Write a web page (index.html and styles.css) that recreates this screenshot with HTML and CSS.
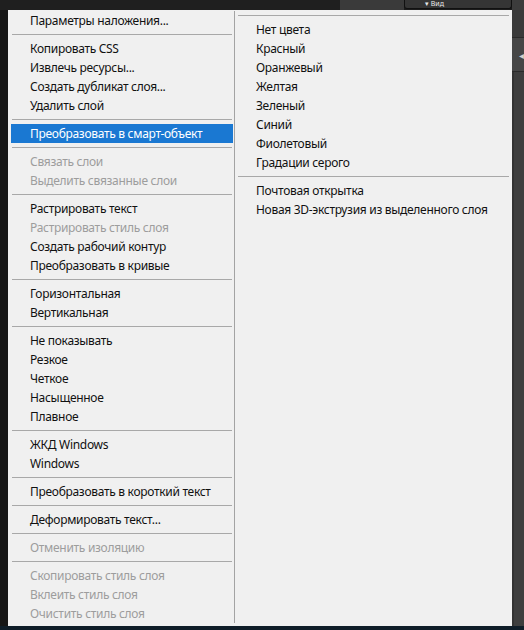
FILE: index.html
```html
<!DOCTYPE html>
<html lang="ru">
<head>
<meta charset="utf-8">
<link rel="stylesheet" href="styles.css">
</head>
<body>
<div class="screen">
  <div class="topbar">
    <div class="top-dark"></div>
    <div class="top-panel"></div>
    <div class="top-btn"><span class="btn-label">▾ Вид</span></div>
    <div class="top-edge"></div>
  </div>
  <div class="middle">
    <div class="left-strip"></div>
    <div class="menu">
      <div class="col col-left">
        <div class="item">Параметры наложения...</div>
        <div class="sep"></div>
        <div class="item">Копировать CSS</div>
        <div class="item">Извлечь ресурсы...</div>
        <div class="item">Создать дубликат слоя...</div>
        <div class="item">Удалить слой</div>
        <div class="sep"></div>
        <div class="item active">Преобразовать в смарт-объект</div>
        <div class="sep"></div>
        <div class="item off">Связать слои</div>
        <div class="item off">Выделить связанные слои</div>
        <div class="sep"></div>
        <div class="item">Растрировать текст</div>
        <div class="item off">Растрировать стиль слоя</div>
        <div class="item">Создать рабочий контур</div>
        <div class="item">Преобразовать в кривые</div>
        <div class="sep"></div>
        <div class="item">Горизонтальная</div>
        <div class="item">Вертикальная</div>
        <div class="sep"></div>
        <div class="item">Не показывать</div>
        <div class="item">Резкое</div>
        <div class="item">Четкое</div>
        <div class="item">Насыщенное</div>
        <div class="item">Плавное</div>
        <div class="sep"></div>
        <div class="item">ЖКД Windows</div>
        <div class="item">Windows</div>
        <div class="sep"></div>
        <div class="item">Преобразовать в короткий текст</div>
        <div class="sep"></div>
        <div class="item">Деформировать текст...</div>
        <div class="sep"></div>
        <div class="item off">Отменить изоляцию</div>
        <div class="sep"></div>
        <div class="item off">Скопировать стиль слоя</div>
        <div class="item off">Вклеить стиль слоя</div>
        <div class="item off">Очистить стиль слоя</div>
      </div>
      <div class="divider"></div>
      <div class="col col-right">
        <div class="sep"></div>
        <div class="item">Нет цвета</div>
        <div class="item">Красный</div>
        <div class="item">Оранжевый</div>
        <div class="item">Желтая</div>
        <div class="item">Зеленый</div>
        <div class="item">Синий</div>
        <div class="item">Фиолетовый</div>
        <div class="item">Градации серого</div>
        <div class="sep"></div>
        <div class="item">Почтовая открытка</div>
        <div class="item">Новая 3D-экструзия из выделенного слоя</div>
      </div>
    </div>
    <div class="right-strip">
      <div class="rs-a"></div>
      <div class="rs-b"><span class="rs-arrow">◂</span></div>
      <div class="rs-c"></div>
    </div>
  </div>
  <div class="bottombar"></div>
</div>
</body>
</html>
```

FILE: styles.css
```css
* { box-sizing: border-box; }
html, body {
  margin: 0;
  padding: 0;
  background: #1d1d1d;
}
.screen {
  width: 524px;
  height: 630px;
  overflow: hidden;
  display: flex;
  flex-direction: column;
  font-family: "Noto Sans", "Open Sans", sans-serif;
  font-size: 12px;
  letter-spacing: -0.3px;
}
.topbar {
  height: 10px;
  display: flex;
  overflow: hidden;
  flex: none;
}
.top-dark {
  width: 340px;
  background: #1f1f1f;
}
.top-panel {
  width: 64px;
  background: #3a3a3a;
}
.top-btn {
  width: 108px;
  background: #353535;
  border: 1px solid #111;
  border-top: none;
  border-radius: 0 0 3px 3px;
  margin-bottom: 1px;
  display: flex;
  align-items: center;
  padding-left: 20px;
}
.btn-label {
  color: #e8e8e8;
  line-height: 8px;
  font-size: 7px;
  letter-spacing: 0;
}
.top-edge {
  flex: 1;
  background: #3c3c3c;
}
.middle {
  height: 616px;
  display: flex;
  flex: none;
}
.left-strip {
  width: 8px;
  background: #161616;
}
.menu {
  width: 504px;
  background: #f0f0f0;
  display: flex;
}
.col {
  display: flex;
  flex-direction: column;
}
.col-left {
  width: 226px;
  padding: 1px 0 3px;
}
.col-right {
  flex: 1;
  padding: 1px 0 3px;
}
.divider {
  width: 1px;
  margin: 1px 0 3px;
  background: #a3a3a3;
}
.item {
  height: 19px;
  line-height: 19px;
  color: #111;
  white-space: nowrap;
}
.col-left .item {
  margin: 0 1px 0 3px;
  padding-left: 19px;
}
.col-right .item {
  margin: 0 3px;
  padding-left: 18px;
}
.item.off {
  color: #9d9d9d;
}
.item.active {
  background: #1a78d2;
  color: #ffffff;
}
.sep {
  height: 9px;
  padding-top: 4px;
}
.sep::before {
  content: "";
  display: block;
  height: 1px;
  background: #a8a8a8;
}
.col-left .sep {
  margin: 0 2px 0 4px;
}
.col-right .sep {
  margin: 0 3px;
}
.right-strip {
  flex: 1;
  background: #3c3c3c;
  display: flex;
  flex-direction: column;
}
.rs-a {
  height: 28px;
  background: #3a3a3a;
  border-bottom: 1px solid #2a2a2a;
}
.rs-b {
  height: 34px;
  background: #464646;
  border-bottom: 1px solid #2a2a2a;
  display: flex;
  align-items: center;
  justify-content: flex-end;
}
.rs-arrow {
  color: #d0d0d0;
  font-size: 10px;
  line-height: 10px;
}
.rs-c {
  flex: 1;
  background: #3e3e3e;
  border-left: 2px solid #333;
}
.bottombar {
  height: 4px;
  flex: none;
  background: #0f1d28;
}
```
